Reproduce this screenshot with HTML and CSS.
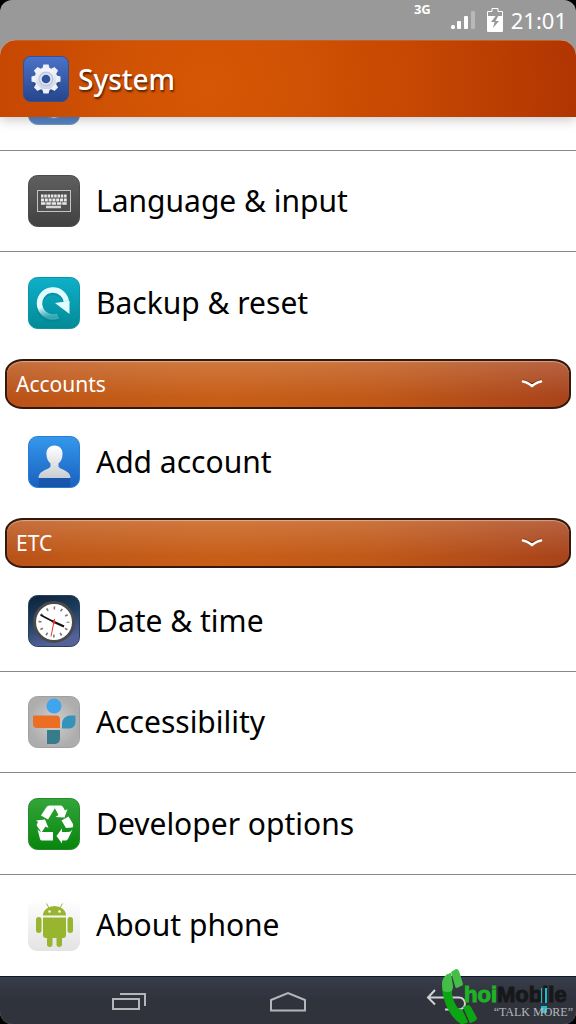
FILE: index.html
```html
<!DOCTYPE html>
<html lang="en">
<head>
<meta charset="utf-8">
<meta name="viewport" content="width=device-width, initial-scale=1">
<title>System</title>
<link rel="stylesheet" href="styles.css">
</head>
<body>
<div class="phone">
  <div class="status">
    <span class="network">3G</span>
    <svg class="signal" viewBox="0 0 24 20" aria-hidden="true">
      <rect x="0" y="15" width="4" height="4" rx="1.5" fill="#fff"/><rect x="6" y="11" width="4" height="8" rx="1" fill="#fff"/><rect x="13" y="6" width="4" height="13" rx="1" fill="#fff"/><rect x="20" y="1" width="4" height="18" rx="1" fill="#b8b8b8"/>
    </svg>
    <svg class="battery" viewBox="0 0 16 24" aria-hidden="true">
      <path d="M.5 23.500V3.500H5V.500h6v3h4.500v20z" fill="none" stroke="#fff"/><path d="M1 8h14v15H1z" fill="#fff"/><path d="M9 7.500 4 14h3.500l-1.500 6 6-7H8.500l3-5.500z" fill="#999"/>
    </svg>
    <time class="clock">21:01</time>
  </div>
  <div class="screen">
  <header class="header">
    <svg class="app-icon" viewBox="0 0 46 46" aria-hidden="true">
      <defs>
        <linearGradient id="gBlue" x2="0" y2="1"><stop stop-color="#4b73c8"/><stop offset="1" stop-color="#26458c"/></linearGradient>
        <linearGradient id="gGear" gradientUnits="userSpaceOnUse" x1="0" y1="-14" x2="0" y2="14"><stop stop-color="#fff"/><stop offset="1" stop-color="#c3cde2"/></linearGradient>
      </defs>
      <rect x=".5" y=".5" width="45" height="45" rx="7" fill="url(#gBlue)" stroke="#34509a"/>
      <circle cx="23" cy="25" r="13" fill="#203a78" opacity=".5"/>
      <g transform="translate(23 23)">
        <circle r="11.500" fill="url(#gGear)"/>
        <g fill="#eef1f8"><g id="teeth"><path id="tooth" d="M-3.800-10-2.600-14.500H2.600L3.800-10z"/><use href="#tooth" transform="rotate(45)"/><use href="#tooth" transform="rotate(90)"/><use href="#tooth" transform="rotate(135)"/></g>
        <use href="#teeth" transform="rotate(180)"/></g>
        <circle r="7.500" fill="#bec9df"/><circle r="6" fill="#dfe5f1"/><circle r="4.300" fill="#34539f"/>
      </g>
    </svg>
    <h1 class="title">System</h1>
  </header>
  <main class="list">
    <div class="row row-partial">
      <svg class="icon" viewBox="0 0 52 52" aria-hidden="true"><rect x=".5" y=".5" width="51" height="51" rx="9" fill="#5686c8" stroke="#7e95b6"/><circle cx="26" cy="34" r="12" fill="#6c97d1"/><circle cx="26" cy="40" r="5" fill="#c3d0df"/></svg>
    </div>
    <a class="row" href="#language">
      <svg class="icon" viewBox="0 0 52 52" aria-hidden="true">
        <defs><linearGradient id="gGrey" x2="0" y2="1"><stop stop-color="#5f5f5f"/><stop offset="1" stop-color="#414141"/></linearGradient></defs>
        <rect x=".5" y=".5" width="51" height="51" rx="9" fill="url(#gGrey)" stroke="#4a4a4a"/>
        <rect x="9.500" y="15.500" width="33" height="21" fill="#505050" stroke="#c4c4c4"/>
        <path d="M13 21h26" stroke="#e8e8e8" stroke-width="3" stroke-dasharray="2.500 .8"/><path d="M13 25h26" stroke="#e8e8e8" stroke-width="3" stroke-dasharray="3 .8"/><path d="M13 28.500h26" stroke="#e8e8e8" stroke-width="2.500" stroke-dasharray="4.500 .8"/><path d="M18 32h15" stroke="#d8d8d8" stroke-width="2.500"/>
      </svg>
      <span class="label">Language &amp; input</span>
    </a>
    <a class="row row-last" href="#backup">
      <svg class="icon" viewBox="0 0 52 52" aria-hidden="true">
        <defs><linearGradient id="gTeal" x2="0" y2="1"><stop stop-color="#0eb0ca"/><stop offset="1" stop-color="#028a96"/></linearGradient>
        <linearGradient id="gArc" x1="0" y1="0" x2=".3" y2="1"><stop offset=".6" stop-color="#e2fbff"/><stop offset="1" stop-color="#8bd5dd" stop-opacity=".4"/></linearGradient></defs>
        <rect x=".5" y=".5" width="51" height="51" rx="9" fill="url(#gTeal)" stroke="#0995a6"/>
        <path d="M38 29A13.500 13.500 0 1 0 30 39" fill="none" stroke="#04788a" stroke-width="6" opacity=".4" transform="translate(0 2)"/>
        <path d="M38.500 27A13.500 13.500 0 1 0 30 39" fill="none" stroke="url(#gArc)" stroke-width="5.500"/>
        <path d="M27 26l14.500 11V24z" fill="#e2fbff"/>
      </svg>
      <span class="label">Backup &amp; reset</span>
    </a>
    <button class="category" type="button"><span>Accounts</span>
      <svg class="chevron" viewBox="0 0 22 10" aria-hidden="true"><path d="M2 1.500 11 5.500 20 1.500" fill="none" stroke="#6d2c10" stroke-width="2.500"/><path d="M2 2.500Q6 3 11 7 16 3 20 2.500" fill="none" stroke="#fff" stroke-width="2.500" stroke-linecap="round"/></svg>
    </button>
    <a class="row row-last" href="#add-account">
      <svg class="icon" viewBox="0 0 52 52" aria-hidden="true">
        <defs><linearGradient id="gSky" x2="0" y2="1"><stop stop-color="#3498eb"/><stop offset="1" stop-color="#1a60bf"/></linearGradient>
        <linearGradient id="gMan" x2="0" y2="1"><stop stop-color="#fff"/><stop offset="1" stop-color="#c9cdd3"/></linearGradient></defs>
        <rect x=".5" y=".5" width="51" height="51" rx="9" fill="url(#gSky)" stroke="#2b7bd0"/>
        <path d="M11 42h31v9H11z" fill="#1650a3" opacity=".7"/>
        <path d="M26.500 9.500c-5.500 0-8.500 4-8 9 .2 4 1.500 7 4 9v3c-1 3-11 3.500-12 10.500 0 1 .5 1 1.500 1h29c1 0 1.500 0 1.500-1-1-7-11-7.500-12-10.500v-3c2.500-2 3.800-5 4-9 .5-5-2.500-9-8-9z" fill="url(#gMan)"/>
      </svg>
      <span class="label">Add account</span>
    </a>
    <button class="category" type="button"><span>ETC</span>
      <svg class="chevron" viewBox="0 0 22 10" aria-hidden="true"><path d="M2 1.500 11 5.500 20 1.500" fill="none" stroke="#6d2c10" stroke-width="2.500"/><path d="M2 2.500Q6 3 11 7 16 3 20 2.500" fill="none" stroke="#fff" stroke-width="2.500" stroke-linecap="round"/></svg>
    </button>
    <a class="row" href="#date">
      <svg class="icon" viewBox="0 0 52 52" aria-hidden="true">
        <defs><linearGradient id="gNight" x2=".3" y2="1"><stop stop-color="#0d2137"/><stop offset=".5" stop-color="#1d3e5f"/><stop offset="1" stop-color="#55629a"/></linearGradient></defs>
        <rect x=".5" y=".5" width="51" height="51" rx="9" fill="url(#gNight)" stroke="#27405d"/>
        <circle cx="26" cy="27" r="19.500" fill="#fff" stroke="#4a4a4c" stroke-width="3"/>
        <circle cx="26" cy="27" r="14" fill="none" stroke="#777" stroke-width="3" stroke-dasharray="1.600 5.730" stroke-dashoffset=".8"/>
        <path d="M12.500 20 26 27" stroke="#111" stroke-width="1.600"/><path d="M24 26 36 31.500" stroke="#111" stroke-width="2.200"/><path d="M26.500 24 23 41.500" stroke="#e33" stroke-width="1"/><circle cx="26" cy="27" r="1.500" fill="#e22"/>
      </svg>
      <span class="label">Date &amp; time</span>
    </a>
    <a class="row" href="#accessibility">
      <svg class="icon" viewBox="0 0 52 52" aria-hidden="true">
        <defs><radialGradient id="gSilver"><stop stop-color="#d0d0d0"/><stop offset="1" stop-color="#adadad"/></radialGradient></defs>
        <rect x=".5" y=".5" width="51" height="51" rx="9" fill="url(#gSilver)" stroke="#a0a0a0"/>
        <circle cx="26" cy="10" r="7.500" fill="#3fa5ec"/><path d="M5 19.500h23a4 4 0 0 1 4 4V32H9a4 4 0 0 1-4-4z" fill="#ec6e22"/><path d="M47.500 19.500V26a6 6 0 0 1-6 6.500H34V28a8 8 0 0 1 8-8.500z" fill="#3593bb"/><path d="M19 34h13v9a5 5 0 0 1-5 5h-8z" fill="#387b8b"/>
      </svg>
      <span class="label">Accessibility</span>
    </a>
    <a class="row" href="#developer">
      <svg class="icon" viewBox="0 0 52 52" aria-hidden="true">
        <defs><linearGradient id="gGreen" x2="0" y2="1"><stop stop-color="#33a53a"/><stop offset="1" stop-color="#07860d"/></linearGradient></defs>
        <rect x=".5" y=".5" width="51" height="51" rx="9" fill="url(#gGreen)" stroke="#29872d"/>
        <g fill="#fff"><path d="M13 17.500 18.500 9q1-1.500 3-1.500h4L27 10 20 21.500z"/><path d="M25.500 7.500h7.500q1 0 2 1.500l2 3.500 2.500-1.500-3 8.500-9-.5 3-2z"/><path d="M8 22.500l9-1 3.500 8.500-3-1.500-4 6L9 28q-.5-1 0-2l1-2z"/><path d="M9.500 31q1.500 3 4 3H25v8.500H14q-1.500 0-2-1.500z"/><path d="M33.500 22.500l7-4 4.500 7.500q.5 2-.5 3.500L38 30z"/><path d="M28.500 38l5.500-7.500v3.500h6q3 0 4.500-2.500L40 41q-1 1.500-2.500 1.500H34V45.500z"/></g>
      </svg>
      <span class="label">Developer options</span>
    </a>
    <a class="row row-last" href="#about">
      <svg class="icon" viewBox="0 0 52 52" aria-hidden="true">
        <defs><linearGradient id="gPale" x2="0" y2="1"><stop stop-color="#fff"/><stop offset="1" stop-color="#e3e3e3"/></linearGradient></defs>
        <rect width="52" height="52" rx="9" fill="url(#gPale)"/>
        <g fill="#97b52f"><path d="M15 16.500a11.500 9.500 0 0 1 23 0z"/><path d="M15 18.500h23V36a3 3 0 0 1-3 3H18a3 3 0 0 1-3-3z"/><rect x="8" y="18" width="5.500" height="16" rx="2.700"/><rect x="39.500" y="18" width="5.500" height="16" rx="2.700"/><rect x="19" y="34" width="5.500" height="14" rx="2.700"/><rect x="28.500" y="34" width="5.500" height="14" rx="2.700"/></g>
        <path d="M21 9l-2.500-4.500M32 9l2.500-4.500" stroke="#97b52f"/><circle cx="21.500" cy="12.500" r="1.200" fill="#fff"/><circle cx="31.500" cy="12.500" r="1.200" fill="#fff"/>
      </svg>
      <span class="label">About phone</span>
    </a>
  </main>
  </div>
  <nav class="nav">
    <button class="nav-btn" type="button" aria-label="Recent apps"><svg width="36" height="20" viewBox="0 0 36 20" fill="none" stroke="#b5b6ba" stroke-width="2"><path d="M2 7h26v10H2z"/><path d="M9 2h25v12"/></svg></button>
    <button class="nav-btn" type="button" aria-label="Home"><svg width="38" height="22" viewBox="0 0 38 22" fill="none" stroke="#b5b6ba" stroke-width="2"><path d="M2 19.500V9L19 2l17 7v10.500z"/></svg></button>
    <button class="nav-btn nav-back" type="button" aria-label="Back"><svg width="42" height="24" viewBox="0 0 42 24" fill="none" stroke="#d0d1d4" stroke-width="2"><path d="M9 1 2 8.500l7 7M2 8.500h31a6 6 0 0 1 0 12H19"/></svg></button>
    <div class="watermark">
      <svg class="handset" viewBox="0 0 36 55" aria-hidden="true">
        <path d="M9 4Q0 6 0 16C0 34 10 50 19 55q5 0 7-2L20 40q-3 1-5-2-6-9-5-18l1-1z" fill="#0da514"/><path d="M9 4Q0 6 0 16l1 6q4 2 9 0l1-4z" fill="#45bd49"/>
        <path d="M9 3l5-3q2 0 3 2l4 13q0 2-2 2l-4 2q-2 0-2-2z" fill="#45bd49"/><path d="M21 38l5-2q2 0 3 2l6 11q0 2-2 3l-4 2q-2 0-2-2z" fill="#0da514"/>
      </svg>
      <span class="brand"><span class="brand-start">hoi</span><span class="brand-end">Mobile</span></span>
      <svg class="accent" viewBox="0 0 6 25" aria-hidden="true"><path d="M0 0h1v15H0zM4 0h2v15H4zM0 18h6v7H0z" fill="#18bdcf"/></svg>
      <span class="slogan">“TALK MORE”</span>
    </div>
  </nav>
</div>
</body>
</html>
```
FILE: styles.css
```css
* { box-sizing: border-box; }

body {
  margin: 0;
  background: #000;
  font-family: "Noto Sans", "Open Sans", sans-serif;
}

.phone {
  display: flex;
  flex-direction: column;
  min-height: 100vh;
  border-radius: 12px;
  background: #999;
  overflow: hidden;
}

.status {
  display: flex;
  align-items: center;
  justify-content: flex-end;
  height: 40px;
  padding-right: 9px;
  color: #fff;
}

.network {
  align-self: flex-start;
  margin-right: 20px;
  font-size: 13px;
  line-height: 18px;
  font-weight: 700;
}

.signal { width: 24px; height: 20px; margin-right: 12px; }
.battery { width: 16px; height: 24px; margin-right: 8px; }
.clock { font-size: 22px; line-height: 40px; }

.screen {
  display: flex;
  flex: 1;
  flex-direction: column;
  border-radius: 16px 16px 0 0;
  background: #fff;
  overflow: hidden;
}

.header {
  z-index: 1;
  display: flex;
  align-items: center;
  gap: 9px;
  height: 77px;
  padding-left: 23px;
  border-top: 1px solid #c95f25;
  background: radial-gradient(circle at 36% 60%, #d65704, #d05204 25%, #c54702 57%, #b03502 100%);
  box-shadow: 0 2px 12px rgba(0, 0, 0, .25);
}

.app-icon { width: 46px; height: 46px; }

.title {
  margin: 0;
  color: #fff;
  font-size: 28px;
  line-height: 40px;
  font-weight: 500;
  text-shadow: 1px 2px 2px rgba(0, 0, 0, .6);
}

.list {
  display: flex;
  flex: 1;
  flex-direction: column;
}

.row {
  display: flex;
  flex: 1 0 100px;
  align-items: center;
  gap: 16px;
  padding-left: 28px;
  border-bottom: 1px solid #888;
  color: #000;
  text-decoration: none;
}

.row-last { border-bottom: 0; }

.row-partial {
  flex: 0 0 34px;
  align-items: flex-end;
  min-height: 0;
  padding-bottom: 25px;
  overflow: hidden;
}

.icon { flex: none; width: 52px; height: 52px; }

.label { font-size: 30px; line-height: 40px; }

.category {
  display: flex;
  align-items: center;
  justify-content: space-between;
  height: 50px;
  margin: 5px 5px 3px;
  padding: 0 26px 0 9px;
  border: 2px solid #35180d;
  border-radius: 18px / 14px;
  background:
    linear-gradient(rgba(255, 255, 255, .17), rgba(255, 255, 255, 0) 80%),
    radial-gradient(circle at 38% 100%, #c85f18, #c05818 45%, #a8431b 100%);
  box-shadow: inset 0 1px 1px rgba(255, 255, 255, .4);
  color: #fff;
  font-family: inherit;
  font-size: 21px;
  line-height: 30px;
}

.chevron { width: 22px; height: 10px; }

.nav {
  position: relative;
  display: grid;
  grid-template-columns: repeat(3, 1fr);
  height: 48px;
  padding: 0 50px;
  border-top: 1px solid #0c1730;
  background: linear-gradient(#373c49, #30333c 50%, #30333c);
}

.nav-btn {
  display: flex;
  align-items: center;
  justify-content: center;
  padding: 3px 0 0;
  border: 0;
  background: none;
}

.nav-back { padding: 0; }

/* Brand stamp laid over the corner of the navigation bar */
.watermark {
  position: absolute;
  right: 0;
  bottom: 0;
  width: 134px;
  height: 55px;
}

.handset { position: absolute; left: 0; top: 0; width: 36px; height: 55px; }

.brand {
  position: absolute;
  left: 22px;
  top: 13px;
  font-family: "Liberation Sans", sans-serif;
  font-size: 22px;
  line-height: 26px;
  font-weight: 700;
  -webkit-text-stroke: 1px;
}

.brand-start { color: #20b226; }
.brand-end { color: #17181b; }

.accent { position: absolute; left: 99px; top: 19px; width: 6px; height: 25px; }

.slogan {
  position: absolute;
  right: 3px;
  top: 36px;
  color: #b7b8bc;
  font-family: "Liberation Serif", serif;
  font-size: 12px;
  line-height: 14px;
}
```
